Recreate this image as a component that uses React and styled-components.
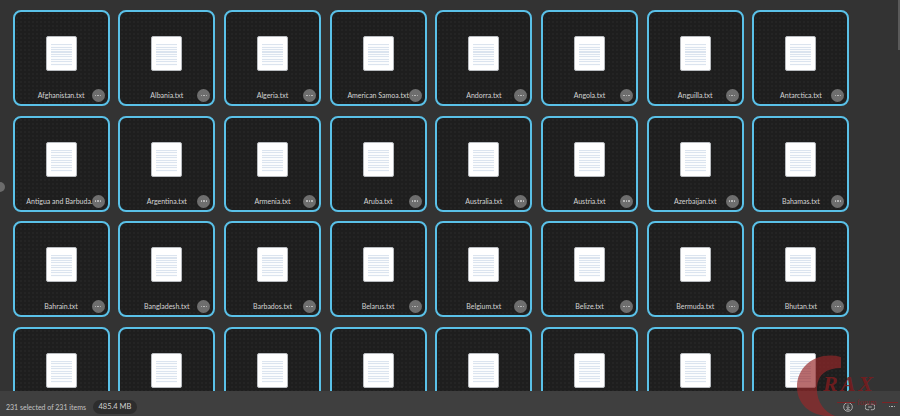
import React from 'react';
import styled, { createGlobalStyle } from 'styled-components';

const GlobalStyle = createGlobalStyle`
  html, body {
    margin: 0;
    padding: 0;
    background: #333333;
    overflow: hidden;
  }
`;

const Page = styled.div`
  position: relative;
  width: 900px;
  height: 416px;
  display: flex;
  flex-direction: column;
  overflow: hidden;
  background: #333333;
  font-family: Lato, "Liberation Sans", sans-serif;
`;

const Grid = styled.div`
  flex: 1;
  min-height: 0;
  overflow: hidden;
  display: grid;
  grid-template-columns: repeat(8, 97px);
  grid-auto-rows: 96px;
  column-gap: 8.7px;
  row-gap: 9.6px;
  padding: 10px 0 0 12.6px;
`;

const Card = styled.div`
  position: relative;
  box-sizing: border-box;
  border: 2px solid #5ac1e8;
  border-radius: 8px;
  background-color: #1e1e1e;
  background-image: radial-gradient(#2b2b2b 0.6px, transparent 0.8px);
  background-size: 4px 4px;
  display: flex;
  flex-direction: column;
  align-items: center;
`;

const Doc = styled.div`
  box-sizing: border-box;
  width: 31px;
  height: 35px;
  margin-top: 24px;
  padding: 7px 4px 4px 4px;
  background: #ffffff;
  border: 1px solid #b9bcc0;
  border-radius: 2px;
  display: flex;
`;

const DocLines = styled.div`
  flex: 1;
  background-image: repeating-linear-gradient(
    to bottom,
    #dbe4ef 0,
    #dbe4ef 1px,
    #fbfcfd 1px,
    #fbfcfd 2.5px
  );
`;

const Label = styled.span`
  position: absolute;
  left: 6px;
  right: 6px;
  bottom: 3px;
  text-align: center;
  font-size: 7px;
  line-height: 11px;
  color: #d4d4d4;
  white-space: nowrap;
`;

const MoreButton = styled.div`
  position: absolute;
  right: 3px;
  bottom: 2px;
  width: 13px;
  height: 13px;
  border-radius: 50%;
  background: #6e6e6e;
  display: flex;
  align-items: center;
  justify-content: center;
  gap: 1px;
`;

const Dot = styled.i`
  width: 1.5px;
  height: 1.5px;
  border-radius: 50%;
  background: ${(p) => p.$color || '#c4c4c4'};
`;

const StatusBar = styled.div`
  flex: none;
  box-sizing: border-box;
  height: 25px;
  background: #3f3f3f;
  display: flex;
  align-items: center;
  padding: 6px 3px 0 6px;
  color: #c4c4c4;
  font-size: 7px;
`;

const SizeBadge = styled.span`
  margin-left: 7px;
  box-sizing: border-box;
  width: 44px;
  height: 14px;
  line-height: 14px;
  text-align: center;
  border-radius: 7px;
  background: #2d2d2d;
  color: #d0d0d0;
  font-size: 7.5px;
`;

const Actions = styled.div`
  margin-left: auto;
  display: flex;
  align-items: center;
  gap: 12px;
  color: #bcbcbc;
`;

const DotsAction = styled.div`
  display: flex;
  gap: 1px;
  width: 10px;
  justify-content: center;
`;

const SideKnob = styled.div`
  position: absolute;
  left: -5px;
  top: 182px;
  width: 10px;
  height: 10px;
  border-radius: 50%;
  background: #6b6b6b;
`;

const ScrollThumb = styled.div`
  position: absolute;
  right: 0;
  top: 0;
  width: 2px;
  height: 50px;
  background: #5a5a5a;
`;

const Watermark = styled.div`
  position: absolute;
  left: 796px;
  top: 354px;
  width: 104px;
  height: 62px;
  pointer-events: none;
`;

const WatermarkMark = styled.svg`
  position: absolute;
  left: 0;
  top: 0;
  width: 50px;
  height: 62px;
`;

const WatermarkName = styled.span`
  position: absolute;
  left: 27px;
  top: 18px;
  font-family: "Liberation Serif", serif;
  font-style: italic;
  font-weight: 700;
  font-size: 22px;
  line-height: 24px;
  letter-spacing: 3px;
  color: rgba(120, 28, 30, 0.9);
`;

const WatermarkSub = styled.span`
  position: absolute;
  left: 61px;
  top: 44px;
  font-family: "Liberation Serif", serif;
  font-size: 8px;
  line-height: 10px;
  color: rgba(130, 32, 34, 0.9);
`;

const WatermarkRule = styled.i`
  position: absolute;
  top: 48px;
  height: 1px;
  left: ${(p) => p.$left}px;
  width: ${(p) => p.$width}px;
  background: rgba(130, 32, 34, 0.9);
`;

// last row runs under the status bar, so its names never show
const names = [
  'Afghanistan', 'Albania', 'Algeria', 'American Samoa', 'Andorra', 'Angola', 'Anguilla', 'Antarctica',
  'Antigua and Barbuda', 'Argentina', 'Armenia', 'Aruba', 'Australia', 'Austria', 'Azerbaijan', 'Bahamas',
  'Bahrain', 'Bangladesh', 'Barbados', 'Belarus', 'Belgium', 'Belize', 'Bermuda', 'Bhutan',
  '', '', '', '', '', '', '', '',
];

function FileCard({ name }) {
  const label = name.length > 16 ? `${name}...` : `${name}.txt`;
  return (
    <Card>
      <Doc>
        <DocLines />
      </Doc>
      {name && <Label>{label}</Label>}
      {name && (
        <MoreButton>
          <Dot />
          <Dot />
          <Dot />
        </MoreButton>
      )}
    </Card>
  );
}

export default function App() {
  return (
    <>
      <GlobalStyle />
      <Page>
        <Grid>
          {names.map((name, index) => (
            <FileCard key={`file-${index}`} name={name} />
          ))}
        </Grid>
        <StatusBar>
          231 selected of 231 items
          <SizeBadge>485.4 MB</SizeBadge>
          <Actions>
            <svg width="10" height="10" viewBox="0 0 12 12" fill="none" stroke="currentColor" strokeWidth="1">
              <circle cx="6" cy="6" r="5.2" />
              <path d="M6 3v4.5M4 6l2 2 2-2M3.8 9.3h4.4" />
            </svg>
            <svg width="10" height="8" viewBox="0 0 12 9" fill="none" stroke="currentColor" strokeWidth="1.1">
              <path d="M5 1.2H3.2a3.3 3.3 0 0 0 0 6.6H5M7 1.2h1.8a3.3 3.3 0 0 1 0 6.6H7M3.8 4.5h4.4" />
            </svg>
            <DotsAction>
              <Dot $color="#c8c8c8" />
              <Dot $color="#c8c8c8" />
              <Dot $color="#c8c8c8" />
            </DotsAction>
          </Actions>
        </StatusBar>
        <SideKnob />
        <ScrollThumb />
        <Watermark>
          <WatermarkMark viewBox="0 0 50 62">
            <path
              d="M45 3C22 -3 1 11 1 33c0 16 12 28 30 29h8C28 58 20 47 21 33 22 20 31 14 45 14z"
              fill="rgba(150, 40, 42, 0.68)"
            />
          </WatermarkMark>
          <WatermarkName>RAX</WatermarkName>
          <WatermarkSub>forum</WatermarkSub>
          <WatermarkRule $left={41} $width={18} />
          <WatermarkRule $left={86} $width={16} />
        </Watermark>
      </Page>
    </>
  );
}
